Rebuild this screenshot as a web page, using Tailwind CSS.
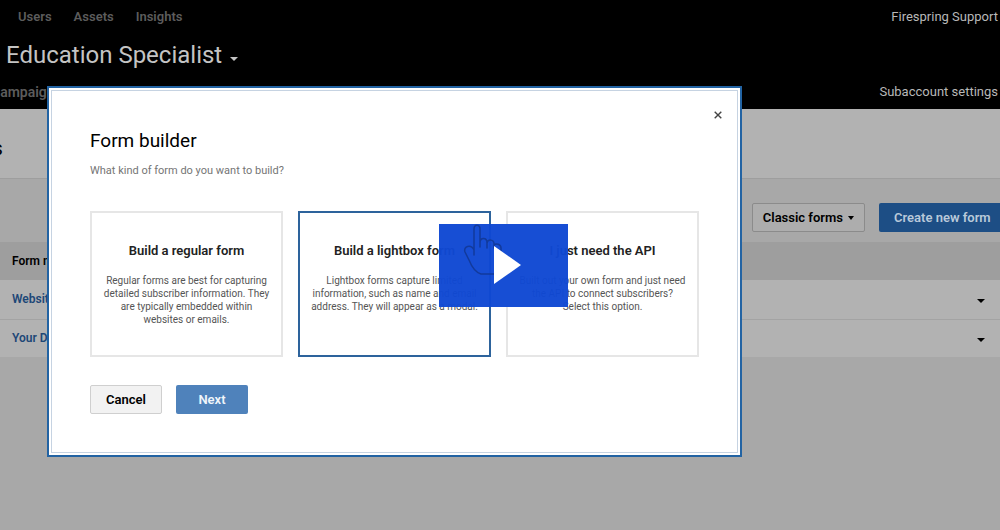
<!DOCTYPE html>
<html lang="en">
<head>
<meta charset="utf-8">
<meta name="viewport" content="width=device-width, initial-scale=1">
<title>Form builder</title>
<script src="https://cdn.jsdelivr.net/npm/@tailwindcss/browser@4"></script>
</head>
<body class="relative min-h-screen overflow-x-hidden bg-[#a8a8a8] font-['Roboto',sans-serif] text-black">
  <header class="flex h-[109px] flex-col bg-black text-[13px]">
    <div class="flex h-[34px] items-center justify-between pl-[18px] pr-[2px]">
      <nav class="flex gap-[22px] font-semibold text-[#5c5c5c]" aria-label="Main">
        <a href="#">Users</a>
        <a href="#">Assets</a>
        <a href="#">Insights</a>
      </nav>
      <a href="#" class="text-[#b8b8b8]">Firespring Support</a>
    </div>
    <div class="flex h-[42px] items-center pl-[6px]">
      <button type="button" class="flex items-center gap-2 text-[24px] text-[#c4c4c4]">Education Specialist
        <svg class="mt-2 h-1 w-2" viewBox="0 0 8 4" fill="currentColor" aria-hidden="true"><path d="M0 0h8L4 4z"/></svg>
      </button>
    </div>
    <div class="flex h-[32px] items-center justify-between pr-[2px]">
      <a href="#" class="-ml-[9px] text-[14px] font-semibold text-[#5c5c5c]">Campaigns</a>
      <a href="#" class="text-[#b8b8b8]">Subaccount settings</a>
    </div>
  </header>

  <main>
    <div class="flex h-[70px] items-center overflow-hidden border-b border-[#9e9e9e] bg-[#b2b2b2]">
      <h1 class="-ml-[54px] mt-2 text-[20px]">Forms</h1>
    </div>
    <div class="flex h-[63px] items-end justify-end gap-[14px] pb-[10px]">
      <button type="button" class="flex h-[29px] shrink-0 items-center gap-[5px] rounded-xs border border-[#8b8b8b] bg-[#adadad] px-[10px] text-[13px] font-semibold">Classic forms
        <svg class="h-1 w-[6px]" viewBox="0 0 8 4" preserveAspectRatio="none" fill="currentColor" aria-hidden="true"><path d="M0 0h8L4 4z"/></svg>
      </button>
      <button type="button" class="h-[29px] w-[121px] shrink-0 rounded-l-xs bg-[#1d4e85] pl-[15px] text-left text-[13px] font-semibold whitespace-nowrap text-[#b9c9da]">Create new form</button>
    </div>
    <table class="w-full text-left text-[12px] font-semibold">
      <thead>
        <tr class="h-[38px] bg-[#9e9e9e]"><th class="pl-3 font-semibold" scope="col">Form name</th><td></td></tr>
      </thead>
      <tbody class="bg-[#b2b2b2] text-[#1d4777]">
        <tr class="h-[39px] border-b border-[#a3a3a3]">
          <td class="pl-3"><a href="#">Website signup</a></td>
          <td class="pt-[3px] pr-[15px]"><button type="button" aria-label="Website signup options" class="ml-auto block text-black"><svg class="h-1 w-2" viewBox="0 0 8 4" fill="currentColor"><path d="M0 0h8L4 4z"/></svg></button></td>
        </tr>
        <tr class="h-[38px]">
          <td class="pl-3"><a href="#">Your Details</a></td>
          <td class="pt-[3px] pr-[15px]"><button type="button" aria-label="Your Details options" class="ml-auto block text-black"><svg class="h-1 w-2" viewBox="0 0 8 4" fill="currentColor"><path d="M0 0h8L4 4z"/></svg></button></td>
        </tr>
      </tbody>
    </table>
  </main>

  <div class="absolute inset-0 pt-[86px] pl-[47px]">
    <section role="dialog" aria-labelledby="dialog-title" class="w-full max-w-[695px] border-2 border-[#2263a3] bg-white p-[2px]">
      <div class="relative border border-[#c6d3e2] px-[38px] pt-[38px] pb-[38px]">
        <button type="button" aria-label="Close" class="absolute top-[18px] right-[13px] p-[2px] text-[#444]">
          <svg class="h-2 w-2" viewBox="0 0 8 8" fill="none" stroke="currentColor" stroke-width="1.4" aria-hidden="true"><path d="M.7.7l6.6 6.6M7.3.7L.7 7.3"/></svg>
        </button>
        <h2 id="dialog-title" class="text-[19px] leading-[24px]">Form builder</h2>
        <p class="mt-[10px] text-[11px] leading-[16px] text-[#757575]">What kind of form do you want to build?</p>
        <div class="mt-[32px] grid grid-cols-3 gap-[15px] text-center">
          <article class="h-[146px] border-2 border-[#e6e6e6] px-2 pt-[29px]">
            <h3 class="text-[13px] leading-[18px] font-semibold text-[#222]">Build a regular form</h3>
            <p class="mt-[14px] text-[10px] leading-[13px] text-[#555]">Regular forms are best for capturing<br>detailed subscriber information. They<br>are typically embedded within<br>websites or emails.</p>
          </article>
          <article class="relative h-[146px] border-2 border-[#2d639c] px-2 pt-[29px]">
            <h3 class="text-[13px] leading-[18px] font-semibold text-[#222]">Build a lightbox form</h3>
            <p class="mt-[14px] text-[10px] leading-[13px] text-[#555]">Lightbox forms capture limited<br>information, such as name and email<br>address. They will appear as a modal.</p>
          </article>
          <article class="h-[146px] border-2 border-[#e6e6e6] px-2 pt-[29px]">
            <h3 class="text-[13px] leading-[18px] font-semibold text-[#222]">I just need the API</h3>
            <p class="mt-[14px] text-[10px] leading-[13px] text-[#555]">Built out your own form and just need<br>the API to connect subscribers?<br>Select this option.</p>
          </article>
        </div>
        <div class="mt-[28px] flex gap-[14px] text-[13px] font-semibold">
          <button type="button" class="h-[29px] w-[72px] rounded-xs border border-[#cfcfcf] bg-[#f2f2f2]">Cancel</button>
          <button type="button" class="h-[29px] w-[72px] rounded-xs bg-[#4f82bb] text-[#f0f5fa]">Next</button>
        </div>
      </div>
    </section>
  </div>

  <div class="absolute inset-0 flex items-center justify-center pl-[7px]">
    <button type="button" aria-label="Play video" class="relative flex h-[83px] w-[129px] items-center justify-center bg-[#1048d3]/97 pl-[7px]">
      <svg class="absolute top-0 left-[24px] h-[52px] w-[44px]" viewBox="0 0 44 52" fill="none" stroke="#123a9c" stroke-width="1.5" stroke-linejoin="round" stroke-linecap="round" aria-hidden="true"><path d="M11 31V5c0-5 6-5 6 0v18M17 19c0-6 7-6 7 0v5M24 19c1-4 7-4 7 1v4M31 21c2-2 7-1 7 3v12l-4 14H18C11 48 8 41 6 36L2 28c-2-6 6-8 9-2"/></svg>
      <svg class="relative h-[38px] w-[27px]" viewBox="0 0 27 38" fill="white" aria-hidden="true"><path d="M0 0l27 19L0 38z"/></svg>
    </button>
  </div>
</body>
</html>
